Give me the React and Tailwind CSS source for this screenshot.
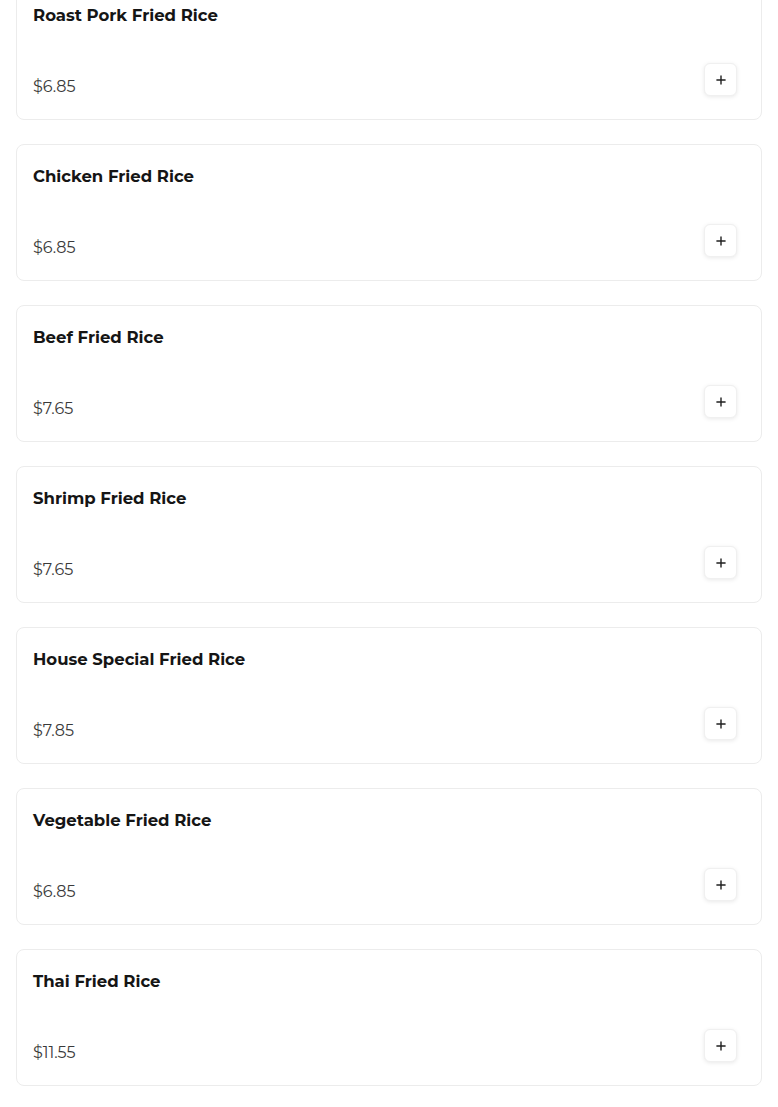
import React from "react";
import { Plus } from "lucide-react";

const items = [
  ["Roast Pork Fried Rice", "$6.85"],
  ["Chicken Fried Rice", "$6.85"],
  ["Beef Fried Rice", "$7.65"],
  ["Shrimp Fried Rice", "$7.65"],
  ["House Special Fried Rice", "$7.85"],
  ["Vegetable Fried Rice", "$6.85"],
  ["Thai Fried Rice", "$11.55"],
];

export default function App() {
  return (
    <div
      className="min-h-[1107px] bg-white px-4 overflow-hidden"
      style={{ fontFamily: "Montserrat, Inter, 'Noto Sans', sans-serif" }}
    >
      <div className="flex flex-col gap-6 mt-[-17px]">
        {items.map(([name, price]) => (
          <div
            key={name}
            className="h-[137px] border border-[#ececec] rounded-lg bg-white px-4 pt-[17px] pb-5 flex flex-col"
          >
            <div className="text-[16.5px] leading-[28px] font-bold text-[#151515]">
              {name}
            </div>
            <div className="mt-[34px] flex justify-between items-start">
              <div className="pt-3 text-[16px] leading-[24px] text-[#3a3a3a]">{price}</div>
              <button className="w-[33px] h-[33px] mr-2 rounded-md border border-[#f0f0f0] bg-white shadow-[0_1px_4px_rgba(0,0,0,0.09)] flex items-center justify-center">
                <Plus size={14} strokeWidth={2.4} color="#1f1f1f" />
              </button>
            </div>
          </div>
        ))}
      </div>
    </div>
  );
}
